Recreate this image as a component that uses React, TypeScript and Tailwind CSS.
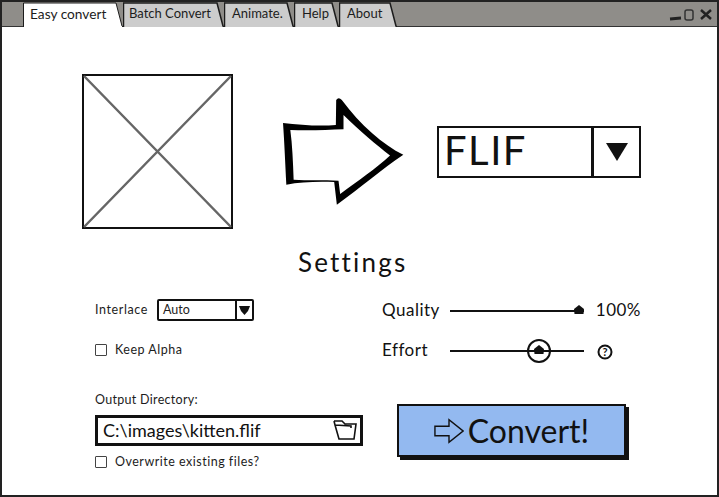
import React from "react";

const font = { fontFamily: '"Lato", "Noto Sans", sans-serif' };

const Tab = ({ label, width, active, tight }: { label: string; width: number; active?: boolean; tight?: boolean }) => (
  <div className="relative flex h-full shrink-0" style={{ width }}>
    <svg className="absolute inset-0" width={width} height="25" viewBox={`0 0 ${width} 25`}>
      <path
        d={`M0.5 25 L0.5 1 L${width - 7} 1 L${width - 1} 24 L${width} 25`}
        fill={active ? "#ffffff" : "#cccccc"}
        stroke="#1c1c1c"
        strokeWidth={active ? 1 : 1.5}
      />
    </svg>
    <span
      className={`relative pt-[2px] text-[#1c1c1c] ${active ? "pl-[7px] text-[13.7px]" : "text-[13px]"} ${
        !active && tight ? "pl-[6px]" : ""
      } ${!active && !tight ? "pl-[8px]" : ""}`}
    >
      {label}
    </span>
  </div>
);

const Checkbox = ({ label }: { label: string }) => (
  <div className="flex items-center gap-[8px]">
    <div className="h-[12px] w-[12px] border border-[#444] rounded-[1px]" />
    <span className="text-[12.5px] tracking-[0.5px] text-[#1c1c1c]">{label}</span>
  </div>
);

const Slider = ({ at, circle }: { at: number; circle?: boolean }) => (
  <div className="relative mt-[2px] h-[2px] w-[134px] bg-[#111]">
    {circle && (
      <div className="absolute top-[-11px] h-[24px] w-[24px] rounded-full border-2 border-[#111]" style={{ left: at - 12 }} />
    )}
    <svg className="absolute top-[-5px]" style={{ left: at - 5 }} width="10" height="9" viewBox="0 0 10 9">
      <path d="M5 0 L10 4 L9.5 9 L0.5 9 L0 4 Z" fill="#111" />
    </svg>
  </div>
);

export default function App() {
  return (
    <div className="h-[497px] w-[719px] overflow-hidden bg-white" style={font}>
      <div className="flex h-[497px] w-[719px] flex-col border-2 border-[#222]">
        <div className="relative z-10 flex h-[24px] shrink-0 justify-between bg-[#8f8d89]">
          <div className="flex h-[24px] pl-[21px]">
            <Tab label="Easy convert" width={100} active />
            <Tab label="Batch Convert" width={101} tight />
            <Tab label="Animate." width={70} />
            <Tab label="Help" width={45} />
            <Tab label="About" width={58} />
          </div>
          <svg className="mr-[4px] mt-[6px]" width="44" height="14" viewBox="0 0 44 14">
            <path d="M1 11 L12 10" stroke="#222" strokeWidth="3" />
            <rect x="16" y="2" width="8" height="10" rx="2" fill="none" stroke="#333" strokeWidth="1.5" />
            <path d="M32 2 L42 11 M42 2 L32 11" stroke="#222" strokeWidth="2.5" />
          </svg>
        </div>
        <div className="h-[1px] shrink-0 bg-[#333]" />
        <div className="flex flex-1 flex-col">
          <div className="mt-[47px] flex items-center pl-[80px]">
            <svg className="shrink-0" width="151" height="155" viewBox="0 0 151 155">
              <rect x="1" y="1" width="149" height="153" fill="#fff" stroke="#111" strokeWidth="2" />
              <path d="M2 2 L149 153 M149 2 L2 153" stroke="#666" strokeWidth="2.5" />
            </svg>
            <svg className="ml-[47px] shrink-0" width="127" height="113" viewBox="30 30 380 340">
              <path
                fillRule="evenodd"
                fill="#000"
                d="M38 114 C90 120 150 125 197 120 L198 45 Q205 35 215 45 C270 120 340 180 400 210 C340 250 270 310 200 360 L192 292 C140 290 90 292 48 300 C45 240 42 170 38 114 Z M60 135 C110 138 170 135 220 133 L220 90 C270 140 320 180 360 212 C320 250 260 290 210 328 L205 288 C160 285 110 288 70 285 C68 230 66 180 60 135 Z"
              />
            </svg>
            <div className="ml-[30px] flex h-[52px] w-[204px] border-2 border-[#111]">
              <span className="flex-1 pl-[5px] text-[40px] leading-[44px] tracking-[1.5px] text-[#111]">FLIF</span>
              <div className="flex w-[48px] items-center justify-center border-l-[3px] border-[#111]">
                <svg width="22" height="18" viewBox="0 0 22 18">
                  <path d="M0 0 L22 0 L11 18 Z" fill="#111" />
                </svg>
              </div>
            </div>
          </div>
          <div className="mt-[16px] pl-[296px] text-[26px] leading-[34px] tracking-[2.2px] text-[#111]">Settings</div>
          <div className="mt-[20px] flex pl-[93px]">
            <div className="flex w-[268px] flex-col">
              <div className="flex h-[22px] items-center">
                <span className="w-[62px] text-[12.5px] tracking-[0.6px] text-[#1c1c1c]">Interlace</span>
                <div className="flex h-[22px] w-[97px] rounded-[2px] border-2 border-[#111]">
                  <span className="flex-1 pl-[4px] text-[12.5px] leading-[18px] text-[#222]">Auto</span>
                  <div className="flex w-[17px] items-center justify-center border-l-2 border-[#111]">
                    <svg width="11" height="10" viewBox="0 0 11 10">
                      <path d="M0 1 L11 1 L9 6 L5.5 10 L2 6 Z" fill="#111" />
                    </svg>
                  </div>
                </div>
              </div>
              <div className="mt-[20px]">
                <Checkbox label="Keep Alpha" />
              </div>
              <div className="mt-[32px] text-[12.5px] leading-[16px] tracking-[0.3px] text-[#1c1c1c]">Output Directory:</div>
              <div className="mt-[7px] flex h-[31px] items-center justify-between border-[3px] border-[#111] pl-[5px] pr-[3px]">
                <span className="text-[18px] text-[#111]">C:\images\kitten.flif</span>
                <svg width="24" height="22" viewBox="0 0 24 22">
                  <path
                    d="M1 2 L9 2 L12 5 L23 5 L21 20 L6 20 L2 6 L1 2 M2 6 L18 7 L18 9"
                    fill="none"
                    stroke="#111"
                    strokeWidth="1.6"
                  />
                </svg>
              </div>
              <div className="mt-[7px]">
                <Checkbox label="Overwrite existing files?" />
              </div>
            </div>
            <div className="ml-[19px] flex w-[259px] flex-col">
              <div className="flex h-[22px] items-center">
                <span className="w-[68px] text-[17px] tracking-[0.5px] text-[#111]">Quality</span>
                <Slider at={129} />
                <span className="ml-[12px] text-[17px] tracking-[0.5px] text-[#111]">100%</span>
              </div>
              <div className="mt-[18px] flex h-[22px] items-center">
                <span className="w-[68px] text-[17px] tracking-[0.5px] text-[#111]">Effort</span>
                <Slider at={89} circle />
                <svg className="ml-[13px] mt-[4px]" width="16" height="16" viewBox="0 0 16 16">
                  <circle cx="8" cy="8" r="6.5" fill="none" stroke="#111" strokeWidth="2" />
                  <text x="8" y="12" textAnchor="middle" fontSize="11" fontWeight="700" fill="#111">?</text>
                </svg>
              </div>
              <div className="mt-[43px] ml-[15px] flex h-[53px] w-[229px] items-center justify-center gap-[4px] border-2 border-[#111] bg-[#93b9f0] shadow-[3px_3px_0_#111]">
                <svg width="30" height="26" viewBox="0 0 32 26">
                  <path d="M1 8 L16 8 L16 1 L31 13 L16 25 L16 18 L1 18 Z" fill="none" stroke="#111" strokeWidth="1.5" />
                </svg>
                <span className="text-[32px] leading-[40px] text-[#111]">Convert!</span>
              </div>
            </div>
          </div>
        </div>
      </div>
    </div>
  );
}
